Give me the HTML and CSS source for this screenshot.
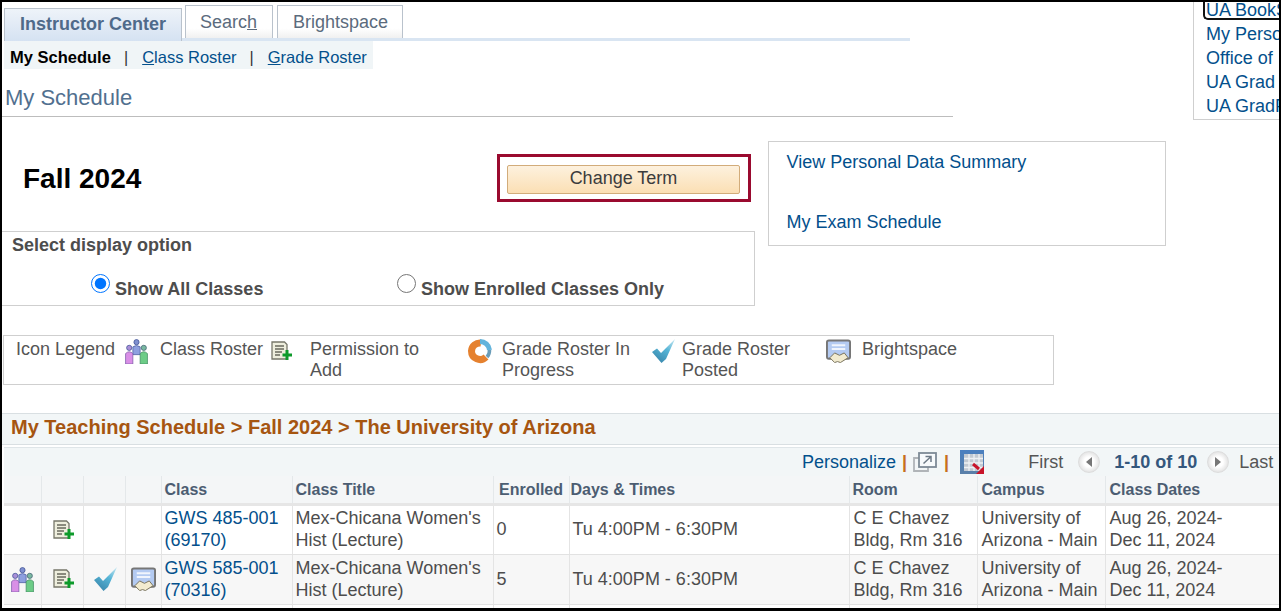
FILE: index.html
```html
<!DOCTYPE html>
<html lang="en">
<head>
<meta charset="utf-8">
<title>My Schedule</title>
<link rel="stylesheet" href="styles.css">
</head>
<body>
<svg class="defs" width="0" height="0" aria-hidden="true">
  <defs>
    <linearGradient id="g-check" x1="0.300" y1="1" x2="0.900" y2="0">
      <stop offset="0" stop-color="#3a88ad"/>
      <stop offset="0.550" stop-color="#55b4d6"/>
      <stop offset="1" stop-color="#c0e4f0"/>
    </linearGradient>
    <linearGradient id="g-grid" x1="0" y1="0" x2="0" y2="1">
      <stop offset="0" stop-color="#4a7fc0"/>
      <stop offset="1" stop-color="#5a7fa8"/>
    </linearGradient>
    <symbol id="i-roster" viewBox="0 0 24 24">
      <circle cx="12" cy="3" r="2.500" fill="#7f90d0" stroke="#3d4f92" stroke-width=".7"/>
      <path d="M8.500 7.500q3.500-2.500 7 0V15h-7z" fill="#8d9fdf" stroke="#4a5ba0" stroke-width=".7"/>
      <circle cx="5" cy="8.500" r="2.500" fill="#a98fd8" stroke="#3d4f92" stroke-width=".7"/>
      <path d="M1.500 14q3.500-3.500 7 0V24h-7z" fill="#d98fe6" stroke="#7a5aa8" stroke-width=".7"/>
      <circle cx="19" cy="8.500" r="2.500" fill="#79b8a0" stroke="#3f5f70" stroke-width=".7"/>
      <path d="M15.500 14q3.500-3.500 7 0V24h-7z" fill="#6dcc87" stroke="#3f8a60" stroke-width=".7"/>
    </symbol>
    <symbol id="i-perm" viewBox="0 0 22 20">
      <path d="M1 1h12.500l2.500 2.500V18H1z" fill="#eeeedd" stroke="#77776a" stroke-width="1.300"/>
      <path d="M4 5h9M4 8h9M4 11h7M4 14h5" stroke="#6a6a5e" stroke-width="1.300"/>
      <path d="M16 9v10M11.500 14h9.500" stroke="#0d9a2a" stroke-width="3"/>
    </symbol>
    <symbol id="i-prog" viewBox="0 0 28 28">
      <path d="M15 6A8.500 8.500 0 0 0 5.500 14 8.500 8.500 0 0 0 20 20" fill="none" stroke="#e5812f" stroke-width="7"/>
      <path d="M14 4.500A9.500 9.500 0 0 1 23.500 13" fill="none" stroke="#63b4dc" stroke-width="5"/>
      <path d="M23.500 13A9.500 9.500 0 0 1 21 20" fill="none" stroke="#6a9cb8" stroke-width="3.500"/>
    </symbol>
    <symbol id="i-check" viewBox="0 0 24 24">
      <path d="M0 13l5-3.500 4 4.500L23 0 14 20l-4.500 4z" fill="url(#g-check)"/>
    </symbol>
    <symbol id="i-bright" viewBox="0 0 26 24">
      <rect x="1" y="1" width="24" height="19" rx="2" fill="#b4cbf2" stroke="#767676" stroke-width="2"/>
      <path d="M6 6h14M6 10h14" stroke="#f0f5fd" stroke-width="2"/>
      <path d="M4 19l5-5 5 2.500 5-2.500 4 5-8 5-3-1-3 1z" fill="#f2ebcf" stroke="#77705a" stroke-width="1"/>
    </symbol>
    <symbol id="i-pop" viewBox="0 0 24 20">
      <path d="M6 6H1v13h14v-4" fill="none" stroke="#b0b4b8" stroke-width="1.800"/>
      <rect x="6" y="1" width="17" height="14" fill="#f7fafc" stroke="#7d8a96" stroke-width="1.800"/>
      <path d="M10.500 11.500l7-6.500M12.500 4.500h5.500v5.500" fill="none" stroke="#6d7a86" stroke-width="1.500"/>
    </symbol>
    <symbol id="i-grid" viewBox="0 0 24 24">
      <rect width="24" height="24" fill="url(#g-grid)"/>
      <rect x="4" y="4" width="19" height="17" fill="#c2c9d2"/>
      <path d="M4 8.500h19M4 13h19M4 17.500h19M9 4v17M14 4v17M19 4v17" stroke="#eef1f4" stroke-width="1.300"/>
      <path d="M13 14l6 5" stroke="#c8142a" stroke-width="3"/>
      <path d="M24 16v8h-8z" fill="#c8142a"/>
    </symbol>
  </defs>
</svg>
<div class="frame">
  <div class="top">
    <div class="top-main">
      <div class="tabs-wrap">
        <nav class="tabs">
          <a class="tab tab-active">Instructor Center</a>
          <a class="tab tab-search">Searc<u>h</u></a>
          <a class="tab tab-bright">Brightspace</a>
        </nav>
      </div>
      <div class="subnav">
        <b class="current">My Schedule</b>
        <span class="pipe">|</span>
        <a class="link"><u>C</u>lass Roster</a>
        <span class="pipe">|</span>
        <a class="link"><u>G</u>rade Roster</a>
      </div>
      <h1 class="page-title">My Schedule</h1>
    </div>
    <aside class="corner-links">
      <a class="link corner-focus">UA BookStores</a>
      <a class="link">My Personal</a>
      <a class="link">Office of</a>
      <a class="link">UA Grad</a>
      <a class="link">UA GradPath</a>
    </aside>
  </div>

  <div class="middle">
    <div class="middle-main">
      <div class="term-row">
        <h2 class="term">Fall 2024</h2>
        <div class="term-action"><button class="btn">Change Term</button></div>
      </div>
      <fieldset class="display">
        <div class="display-title">Select display option</div>
        <div class="display-options">
          <label class="opt opt-a"><input type="radio" name="d" checked>Show All Classes</label>
          <label class="opt"><input type="radio" name="d">Show Enrolled Classes Only</label>
        </div>
      </fieldset>
    </div>
    <div class="quick-links">
      <a class="link">View Personal Data Summary</a>
      <a class="link">My Exam Schedule</a>
    </div>
  </div>

  <div class="legend">
    <span class="lg lg-title">Icon Legend</span>
    <svg class="ic lg-roster"><use href="#i-roster"/></svg>
    <span class="lg lg-r">Class Roster</span>
    <svg class="ic lg-perm"><use href="#i-perm"/></svg>
    <span class="lg lg-p">Permission to Add</span>
    <svg class="ic lg-prog"><use href="#i-prog"/></svg>
    <span class="lg lg-g">Grade Roster In Progress</span>
    <svg class="ic lg-check"><use href="#i-check"/></svg>
    <span class="lg lg-c">Grade Roster Posted</span>
    <svg class="ic lg-bright"><use href="#i-bright"/></svg>
    <span class="lg lg-b">Brightspace</span>
  </div>

  <div class="sched-head">My Teaching Schedule &gt; Fall 2024 &gt; The University of Arizona</div>

  <div class="grid-nav">
    <a class="link">Personalize</a>
    <span class="bar bar-a">|</span>
    <svg class="ic nav-pop"><use href="#i-pop"/></svg>
    <span class="bar bar-b">|</span>
    <svg class="ic nav-grid"><use href="#i-grid"/></svg>
    <span class="nav-first">First</span>
    <span class="round round-l"><i class="tri tri-l"></i></span>
    <b class="count">1-10 of 10</b>
    <span class="round round-r"><i class="tri tri-r"></i></span>
    <span class="nav-last">Last</span>
  </div>

  <table class="sched">
    <colgroup>
      <col class="c1"><col class="c2"><col class="c3"><col class="c4"><col class="c5"><col class="c6"><col class="c7"><col class="c8"><col class="c9"><col class="c10"><col>
    </colgroup>
    <thead>
      <tr><th></th><th></th><th></th><th></th><th>Class</th><th>Class Title</th><th class="th-c">Enrolled</th><th class="th-d">Days &amp; Times</th><th>Room</th><th class="th-e">Campus</th><th class="th-e">Class Dates</th></tr>
    </thead>
    <tbody>
      <tr class="first">
        <td></td><td class="ci"><svg class="ic t-perm"><use href="#i-perm"/></svg></td><td></td><td></td>
        <td class="tight"><a class="link">GWS 485-001 (69170)</a></td><td class="tight">Mex-Chicana Women's Hist (Lecture)</td><td class="mid">0</td><td class="mid">Tu 4:00PM - 6:30PM</td><td>C E Chavez Bldg, Rm 316</td><td>University of Arizona - Main</td><td>Aug 26, 2024-<br>Dec 11, 2024</td>
      </tr>
      <tr class="alt">
        <td class="ci"><svg class="ic t-roster"><use href="#i-roster"/></svg></td><td class="ci"><svg class="ic t-perm"><use href="#i-perm"/></svg></td><td class="ci"><svg class="ic t-check"><use href="#i-check"/></svg></td><td class="ci"><svg class="ic t-bright"><use href="#i-bright"/></svg></td>
        <td class="tight"><a class="link">GWS 585-001 (70316)</a></td><td class="tight">Mex-Chicana Women's Hist (Lecture)</td><td class="mid">5</td><td class="mid">Tu 4:00PM - 6:30PM</td><td>C E Chavez Bldg, Rm 316</td><td>University of Arizona - Main</td><td>Aug 26, 2024-<br>Dec 11, 2024</td>
      </tr>
      <tr class="stub"><td></td><td></td><td></td><td></td><td></td><td></td><td></td><td></td><td></td><td></td><td></td></tr>
    </tbody>
  </table>
</div>
</body>
</html>
```
FILE: styles.css
```css
* { box-sizing: border-box; }
html, body { margin: 0; padding: 0; background: #fff; }
body { font-family: "Liberation Sans", Arial, sans-serif; font-size: 18px; color: #4d4d4d; overflow: hidden; }
.defs { display: block; height: 0; }
.frame { width: 1281px; height: 611px; border: 2px solid #000; border-width: 2px 2px 3px 2px; overflow: hidden; background: #fff; }
.link { color: #03508c; text-decoration: none; display: inline; }
.ic { display: block; flex: none; }

/* top */
.top { display: flex; height: 118px; }
.top-main { width: 951px; border-bottom: 1px solid #bdbdbd; height: 115px; }
.tabs-wrap { height: 39px; padding: 3px 0 0 2px; }
.tabs { display: flex; gap: 3px; width: 906px; height: 36px; align-items: flex-end; border-bottom: 3px solid #d9e5f2; }
.tab { display: block; height: 33px; padding: 6px 0 0 15px; border: 1px solid #b9c2cc; border-bottom: 0; background: linear-gradient(#fff 70%, #f0f0f0); color: #5b6b7d; font-size: 18px; white-space: nowrap; }
.tab-search { width: 88px; padding-left: 14px; }
.tab-bright { width: 126px; margin-left: 1px; }
.tab-active { width: 178px; padding-top: 5px; margin-bottom: -3px; font-weight: bold; color: #4f6a8a; background: linear-gradient(#eef3f9, #d5e2f2); }
.subnav { display: flex; align-items: center; width: 369px; height: 28px; margin-left: 2px; background: #f0f5f7; padding: 5px 0 0 6px; font-size: 16.500px; }
.current { color: #000; width: 101px; }
.pipe { color: #333; margin: 0 14px 0 13px; font-size: 16px; }
.link + .pipe { margin: 0 14px 0 13px; }
.page-title { margin: 16px 0 0 3px; font-size: 22px; font-weight: normal; color: #51708f; line-height: 26px; }
.corner-links { margin-left: 240px; width: 86px; height: 118px; border-left: 1px solid #cfcfcf; border-bottom: 1px solid #cfcfcf; padding: 0 0 0 12px; display: flex; flex-direction: column; overflow: hidden; white-space: nowrap; font-size: 18px; line-height: 24px; }
.corner-links .link { display: block; height: 24px; }
.corner-links .corner-focus { border: 2px solid #111; border-right: 0; border-top: 0; border-radius: 0 0 0 5px; margin-left: -3px; padding-left: 1px; height: 18px; line-height: 17px; margin-bottom: 2px; }

/* middle */
.middle { display: flex; height: 186px; }
.middle-main { width: 753px; }
.term-row { display: flex; align-items: center; height: 111px; padding-top: 5px; }
.term { margin: 1px 0 0; padding-left: 21px; width: 495px; font-size: 28px; color: #000; line-height: 32px; }
.term-action { border: 3px solid #9a0a2f; width: 254px; height: 48px; padding: 8px 7px; }
.btn { display: block; width: 233px; height: 29px; border: 1px solid #d2ac7a; border-radius: 2px; background: linear-gradient(#fdf1de, #fbdfb4); font: 18px "Liberation Sans", Arial, sans-serif; color: #3c3c3c; padding: 0 0 2px; }
.display { margin: 0; padding: 0; border: 1px solid #cfcfcf; border-left: 0; width: 753px; height: 75px; }
.display-title { font-weight: bold; font-size: 18px; padding: 3px 0 0 10px; line-height: 20px; }
.display-options { display: flex; padding: 19px 0 0 88px; font-weight: bold; font-size: 18px; }
.opt { display: flex; align-items: flex-start; line-height: 30px; height: 26px; }
.opt-a { width: 306px; }
.opt input { width: 19px; height: 19px; margin: 0 5px 0 1px; accent-color: #0075ff; }
.quick-links { margin: 21px 0 0 13px; width: 398px; height: 105px; border: 1px solid #cfcfcf; padding: 10px 0 0 17.500px; display: flex; flex-direction: column; gap: 39px; line-height: 21px; }
.quick-links .link { display: block; }

/* legend */
.legend { display: flex; width: 1051px; height: 50px; margin: 29px 0 0 1px; border: 1px solid #cfcfcf; line-height: 21px; font-size: 18px; color: #555; padding: 3px 0 0 12px; }
.lg-title { width: 108px; }
.lg-roster { width: 25px; height: 25px; }
.lg-r { margin-left: 11px; width: 111px; }
.lg-perm { width: 22px; height: 20px; margin-top: 2px; }
.lg-p { margin-left: 17px; width: 135px; }
.lg-prog { width: 28px; height: 28px; margin-left: 21px; margin-top: -2px; }
.lg-g { margin-left: 8px; width: 150px; }
.lg-check { width: 24px; height: 24px; }
.lg-c { margin-left: 6px; width: 144px; }
.lg-bright { width: 25px; height: 24px; }
.lg-b { margin-left: 11px; }

/* section head */
.sched-head { margin-top: 28px; height: 32px; background: #f2f6f7; border-top: 1px solid #d9dfe2; border-bottom: 1px solid #d9dfe2; padding-left: 9px; color: #a65510; font-weight: bold; font-size: 20px; line-height: 27px; }

/* nav */
.grid-nav { display: flex; align-items: center; margin: 2px 0 0 2px; height: 29px; background: #f2f6f7; border-top: 1px solid #dfe5e8; padding-left: 798px; font-size: 18px; white-space: nowrap; }
.bar { color: #c76f1c; font-weight: bold; }
.bar-a { margin: 0 6px; }
.bar-b { margin: 0 0 0 7px; }
.nav-pop { width: 24px; height: 20px; }
.nav-grid { width: 24px; height: 24px; margin-left: 11px; }
.nav-first { margin-left: 44px; color: #555; }
.round { display: flex; align-items: center; justify-content: center; width: 22px; height: 22px; border-radius: 50%; background: radial-gradient(#fff 35%, #cfcfcf); border: 1px solid #ddd; }
.round-l { margin: 0 14px 0 15px; }
.round-r { margin: 0 10px 0 10px; }
.count { color: #34577c; }
.nav-last { color: #555; }
.tri { display: block; width: 0; height: 0; border: 5px solid transparent; }
.tri-l { border-right: 6px solid #777; border-left: 0; }
.tri-r { border-left: 6px solid #777; border-right: 0; }

/* table */
.sched { border-collapse: collapse; table-layout: fixed; width: 1275px; margin-left: 2px; font-size: 18px; line-height: 22px; }
.c1 { width: 37px; } .c2 { width: 42px; } .c3 { width: 42px; } .c4 { width: 36px; } .c5 { width: 131px; } .c6 { width: 201px; } .c7 { width: 76px; } .c8 { width: 280px; } .c9 { width: 128px; } .c10 { width: 128px; }
.sched th { height: 28px; padding: 2px 0 0 3px; text-align: left; color: #4c5d72; font-size: 16px; background: #f4f6f7; border-left: 1px solid #e4e8ea; border-bottom: 3px solid #e6e6e6; }
.sched th.th-c { padding-left: 0; text-align: center; }
.sched th.th-d { padding-left: 1px; }
.sched th.th-e { padding-left: 4px; }
.sched td { padding: 2px 0 2px 4px; border-left: 1px solid #e4e4e4; border-bottom: 1px solid #e2e2e2; vertical-align: top; height: 50px; color: #4d4d4d; }
.sched .first td { padding-top: 1px; }
.sched td.tight { padding-left: 3px; }
.sched td.ci { vertical-align: middle; padding: 0; }
.sched td.mid { vertical-align: middle; padding-left: 3px; }
.sched .alt td { background: #f7f7f7; }
.sched .stub td { height: 8px; padding: 0; background: #fff; }
.sched th:first-child, .sched td:first-child { border-left: 0; }
.t-perm { width: 22px; height: 20px; margin: 0 auto 0 11px; }
.t-roster { width: 25px; height: 25px; margin: 0 auto; }
.t-check { width: 24px; height: 24px; margin: 0 auto 0 10px; }
.t-bright { width: 25px; height: 24px; margin: 0 auto; }
```
